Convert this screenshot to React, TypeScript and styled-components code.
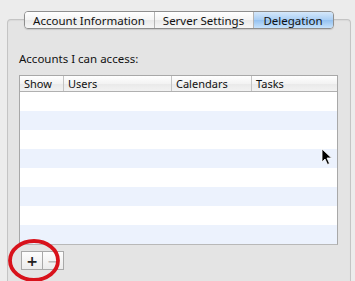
import React from 'react';
import styled, { createGlobalStyle } from 'styled-components';

const GlobalStyle = createGlobalStyle`
  html, body {
    margin: 0;
    padding: 0;
    background: #ececec;
    font-family: "Noto Sans", "DejaVu Sans", sans-serif;
    overflow: hidden;
  }
`;

const Page = styled.div`
  position: relative;
  width: 355px;
  height: 281px;
  padding-top: 11px;
  box-sizing: border-box;
  display: flex;
  flex-direction: column;
`;

const TabBar = styled.div`
  align-self: center;
  margin-left: 2px;
  display: flex;
  height: 16px;
  position: relative;
  z-index: 1;
  border: 1px solid #8e8e8e;
  border-radius: 4px;
  overflow: hidden;
  box-shadow: 0 1px 1px rgba(0, 0, 0, 0.12);
`;

const Tab = styled.div<{ $active?: boolean; $w: number }>`
  width: ${(p) => p.$w}px;
  display: flex;
  align-items: center;
  justify-content: center;
  font-size: 11.5px;
  color: #111;
  background: ${(p) =>
    p.$active
      ? 'linear-gradient(#d5e8fb 0%, #a9cef4 50%, #94c1f0 51%, #c6e2fc 100%)'
      : 'linear-gradient(#ffffff 0%, #f4f4f4 50%, #e9e9e9 51%, #f6f6f6 100%)'};
  & + & {
    border-left: 1px solid #b4b4b4;
  }
`;

const GroupBox = styled.div`
  margin: -10px 4px 0 7px;
  flex: 1;
  border: 1px solid #c4c4c4;
  border-bottom: none;
  border-radius: 4px 4px 0 0;
  background: #e4e4e4;
  padding: 31px 0 0 11px;
  box-shadow: inset 0 1px 1px rgba(0, 0, 0, 0.05);
`;

const Label = styled.div`
  font-size: 11.5px;
  line-height: 16px;
  color: #111;
  height: 24px;
`;

const Table = styled.div`
  width: 317px;
  border: 1px solid #a8a8a8;
  border-bottom-color: #b8b8b8;
  background: #fff;
`;

const HeaderRow = styled.div`
  display: flex;
  height: 15px;
  border-bottom: 1px solid #b0b0b0;
  background: linear-gradient(#ffffff 0%, #f3f3f3 50%, #e9e9e9 51%, #f2f2f2 100%);
`;

const HeaderCell = styled.div<{ $w: number }>`
  width: ${(p) => p.$w}px;
  box-sizing: border-box;
  padding-left: 4px;
  font-size: 11px;
  line-height: 15px;
  color: #111;
  & + & {
    border-left: 1px solid #c4c4c4;
  }
`;

const Row = styled.div<{ $alt: boolean }>`
  height: 19px;
  background: ${(p) => (p.$alt ? '#ecf2fd' : '#ffffff')};
`;

const ButtonRow = styled.div`
  display: flex;
  margin-top: 6px;
  margin-left: 2px;
`;

const SmallButton = styled.div<{ $disabled?: boolean }>`
  width: 20px;
  height: 17px;
  display: flex;
  align-items: center;
  justify-content: center;
  border: 1px solid #a9a9a9;
  background: linear-gradient(#fdfdfd, #ececec);
  font-family: "DejaVu Sans", sans-serif;
  font-size: 14px;
  font-weight: bold;
  color: ${(p) => (p.$disabled ? '#b9b9b9' : '#222')};
  & + & {
    border-left: none;
  }
`;

const Overlay = styled.svg`
  position: absolute;
  pointer-events: none;
`;

const columns = [
  { name: 'Show', w: 43 },
  { name: 'Users', w: 108 },
  { name: 'Calendars', w: 80 },
  { name: 'Tasks', w: 86 },
];

const App: React.FC = () => {
  return (
    <Page>
      <GlobalStyle />
      <TabBar>
        <Tab $w={129}>Account Information</Tab>
        <Tab $w={98}>Server Settings</Tab>
        <Tab $w={79} $active>
          Delegation
        </Tab>
      </TabBar>
      <GroupBox>
        <Label>Accounts I can access:</Label>
        <Table>
          <HeaderRow>
            {columns.map((c) => (
              <HeaderCell key={c.name} $w={c.w}>
                {c.name}
              </HeaderCell>
            ))}
          </HeaderRow>
          {Array.from({ length: 8 }).map((_, i) => (
            <Row key={i} $alt={i % 2 === 1} />
          ))}
        </Table>
        <ButtonRow>
          <SmallButton>+</SmallButton>
          <SmallButton $disabled>−</SmallButton>
        </ButtonRow>
      </GroupBox>

      {/* red annotation ring around the add button */}
      <Overlay style={{ left: 6, top: 237 }} width={60} height={46} viewBox="0 0 60 46">
        <ellipse cx="28" cy="23.5" rx="24" ry="19.5" fill="none" stroke="#d8121b" strokeWidth="3.8" />
      </Overlay>

      {/* mouse pointer */}
      <Overlay style={{ left: 321, top: 148 }} width={12} height={18} viewBox="0 0 12 18">
        <path d="M1 1 L1 14 L4 11 L6.5 16.5 L8.5 15.5 L6 10 L10.5 10 Z" fill="#000" stroke="#fff" strokeWidth="0.8" />
      </Overlay>
    </Page>
  );
};

export default App;
